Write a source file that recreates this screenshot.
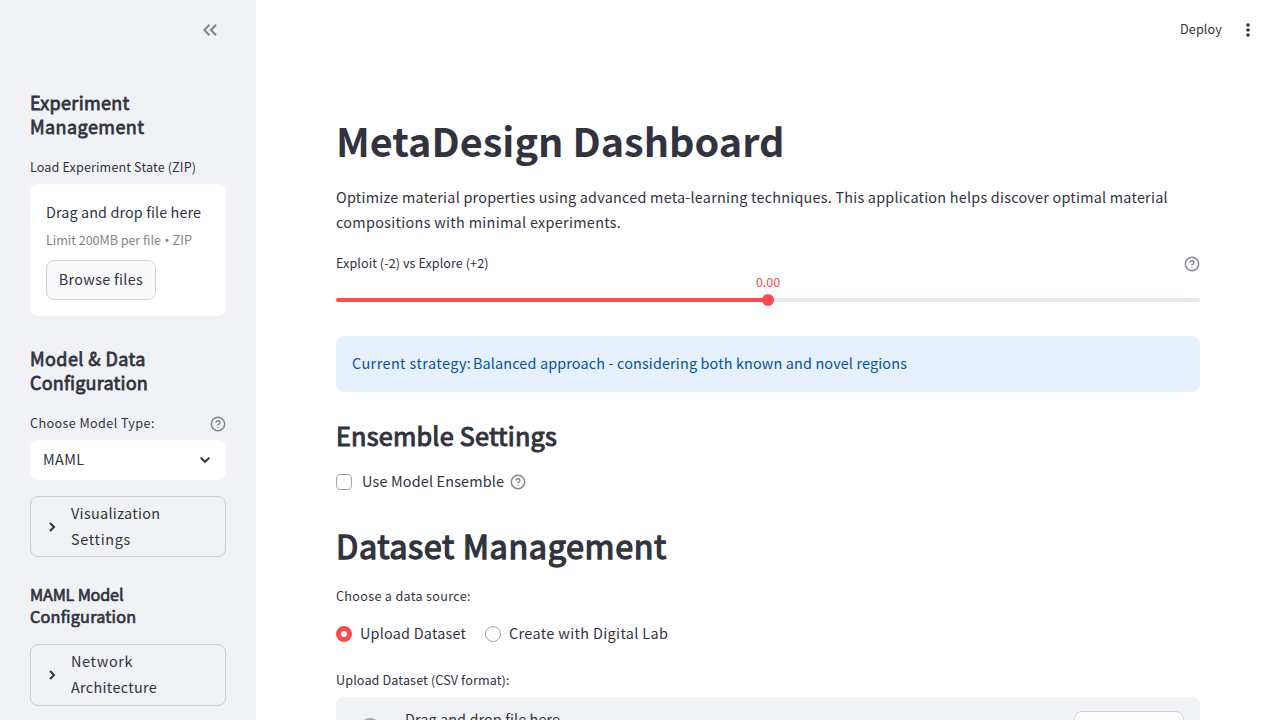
<template>
  <div class="app">
    <aside class="sidebar">
      <div class="side-head">
        <svg width="20" height="20" viewBox="0 0 20 20"><path d="M9.4 4.8 4.4 10l5 5.2M16 4.8l-5 5.2 5 5.2" /></svg>
      </div>
      <h2 class="side-title"><span class="t-exp">Experiment</span><br /><span class="t-mgmt">Management</span></h2>
      <div class="label load"><span>Load Experiment State (ZIP)</span></div>
      <div class="drop">
        <div class="drop-text">Drag and drop file here</div>
        <div class="drop-limit"><span>Limit 200MB per file</span><b>•</b><span>ZIP</span></div>
        <button class="btn">Browse files</button>
      </div>
      <h2 class="side-title second"><span class="t-model">Model &amp; Data</span><br /><span class="t-conf">Configuration</span></h2>
      <div class="label model"><span>Choose Model Type:</span>
        <svg class="help" viewBox="0 0 24 24"><circle cx="12" cy="12" r="10" /><path d="M9.09 9a3 3 0 0 1 5.83 1c0 2-3 3-3 3M12 17h.01" /></svg>
      </div>
      <div class="select"><span>MAML</span>
        <svg width="12" height="8" viewBox="0 0 12 8"><path d="m1.6 1.6 4.4 4.2 4.4-4.2" /></svg>
      </div>
      <div class="expander">
        <svg width="8" height="12" viewBox="0 0 8 12"><path d="m2 2 4 4-4 4" /></svg>
        <div><span class="t-vis">Visualization</span><br /><span class="t-wide">Settings</span></div>
      </div>
      <h3 class="side-sub"><span class="t-maml">MAML Model</span><br /><span class="t-conf">Configuration</span></h3>
      <div class="expander tall">
        <svg width="8" height="12" viewBox="0 0 8 12"><path d="m2 2 4 4-4 4" /></svg>
        <div><span class="t-wide">Network</span><br /><span class="t-vis">Architecture</span></div>
      </div>
    </aside>
    <main class="main">
      <header class="top">
        <span class="deploy">Deploy</span>
        <svg width="4" height="14" viewBox="0 0 4 14"><circle cx="2" cy="2" r="1.8" /><circle cx="2" cy="7" r="1.8" /><circle cx="2" cy="12" r="1.8" /></svg>
      </header>
      <div class="content">
        <h1>MetaDesign Dashboard</h1>
        <p><span class="t-p1">Optimize material properties using advanced meta-learning techniques. This application helps discover optimal material</span><br /><span class="t-p2">compositions with minimal experiments.</span></p>
        <div class="label explore"><span>Exploit (-2) vs Explore (+2)</span>
          <svg class="help" viewBox="0 0 24 24"><circle cx="12" cy="12" r="10" /><path d="M9.09 9a3 3 0 0 1 5.83 1c0 2-3 3-3 3M12 17h.01" /></svg>
        </div>
        <div class="slider">
          <div class="value">0.00</div>
          <div class="track"><i></i></div>
        </div>
        <div class="alert"><span class="t-cur">Current strategy:</span>&#32;<span class="t-bal">Balanced approach - considering both known and novel regions</span></div>
        <h3 class="ensemble">Ensemble Settings</h3>
        <div class="check"><i></i><span>Use Model Ensemble</span>
          <svg class="help" viewBox="0 0 24 24"><circle cx="12" cy="12" r="10" /><path d="M9.09 9a3 3 0 0 1 5.83 1c0 2-3 3-3 3M12 17h.01" /></svg>
        </div>
        <h2 class="dataset">Dataset Management</h2>
        <div class="label source"><span>Choose a data source:</span></div>
        <div class="radios">
          <i class="on"></i><span class="r1">Upload Dataset</span>
          <i></i><span class="r2">Create with Digital Lab</span>
        </div>
        <div class="label upload"><span>Upload Dataset (CSV format):</span></div>
        <div class="wide-drop">
          <svg width="36" height="36" viewBox="0 0 24 24"><path d="M19.35 10.04A7.49 7.49 0 0 0 12 4C9.11 4 6.6 5.64 5.35 8.04A5.994 5.994 0 0 0 0 14c0 3.31 2.69 6 6 6h13c2.76 0 5-2.24 5-5 0-2.64-2.05-4.78-4.65-4.96z" /></svg>
          <div class="wide-text">Drag and drop file here</div>
          <button class="btn"></button>
        </div>
      </div>
    </main>
  </div>
</template>

<style>
html, body { margin: 0; overflow: hidden; }
</style>

<style scoped>
.app { display: flex; height: 720px; overflow: hidden; background: #fff; color: #31333f; font: 14.4px/25.6px "Noto Sans CJK SC", "Noto Sans", sans-serif; white-space: nowrap; }
.app * { box-sizing: border-box; }
h1, h2, h3, p { margin: 0; }
/* semibold weight between the family's regular and bold */
h2, h3 { font-weight: 400; -webkit-text-stroke: .042em #31333f; }

.sidebar { width: 256px; flex: none; padding: 0 30px; background: #f0f2f6; overflow: hidden; height: 720px; }
.side-head { height: 60px; display: flex; justify-content: flex-end; align-items: center; padding-right: 6px; margin-bottom: 30px; }
.side-head svg { fill: none; stroke: #808389; stroke-width: 2; }
.side-title { font-size: 18px; line-height: 24px; height: 48px; }
.second { margin-top: 30px; }
.t-exp { letter-spacing: .32px; }
.t-mgmt { letter-spacing: .43px; }
.t-model { letter-spacing: .42px; }
.t-conf { letter-spacing: .21px; }
.t-maml { letter-spacing: -.18px; }
.t-vis { letter-spacing: .33px; }
.t-wide { letter-spacing: .69px; }
.label { font-size: 12.6px; line-height: 24px; height: 24px; display: flex; justify-content: space-between; align-items: center; }
.label > span { padding-bottom: 2px; }
.load { margin-top: 17px; margin-bottom: 5px; letter-spacing: .125px; }
.load > span { padding-bottom: 0; }
.help { width: 16px; height: 16px; fill: none; stroke: #83858c; stroke-width: 2.2; stroke-linecap: round; stroke-linejoin: round; overflow: visible; }
.drop { height: 132px; background: #fff; border-radius: 8px; padding: 15px 16px 16px; }
.drop-text, .wide-text { height: 25px; line-height: 25px; letter-spacing: .1px; }
.drop-limit { display: flex; height: 20px; line-height: 20px; margin: 6px 0 10px; font-size: 12.6px; letter-spacing: -.05px; color: #83858c; }
.drop-limit b { font: 13px/20px "Noto Sans"; margin: 0 3.5px; }
.btn { display: flex; align-items: center; justify-content: center; width: 110px; height: 40px; padding: 0 0 2px; border: 1px solid #d0d2d8; border-radius: 8px; background: #f9f9fb; font: inherit; color: inherit; letter-spacing: .32px; }
.model { margin: 18px 0 4px; letter-spacing: .4px; }
.select { height: 40px; border-radius: 8px; background: #fff; display: flex; align-items: center; justify-content: space-between; padding: 0 15px 0 13px; letter-spacing: .35px; }
.select > span { padding-bottom: 2px; }
.select svg, .expander svg { fill: none; stroke: #31333f; stroke-width: 2; }
.expander { height: 61px; margin-top: 16px; border: 1px solid #caccd2; border-radius: 8px; display: flex; align-items: center; padding-left: 17px; gap: 15px; }
.expander div { padding-bottom: 2px; }
.expander.tall { height: 62px; }
.side-sub { margin-top: 26px; font-size: 16.2px; line-height: 22px; padding-bottom: 1px; }

.main { flex: 1; min-width: 0; }
.top { height: 60px; display: flex; align-items: center; justify-content: flex-end; padding-right: 30px; gap: 24px; font-size: 12.6px; }
.deploy { padding-bottom: 2px; letter-spacing: .14px; }
.top svg { fill: #31333f; }
.content { padding: 36px 80px 0; }
h1 { height: 88px; padding-top: 17px; font-size: 39.6px; line-height: 53px; font-weight: 700; letter-spacing: .01px; }
p { height: 52px; line-height: 25px; }
.t-p1 { letter-spacing: .233px; }
.t-p2 { letter-spacing: .31px; }
.explore { margin-top: 16px; letter-spacing: .07px; }
.slider { height: 60px; }
.value { height: 20px; line-height: 12px; text-align: center; font-size: 12.6px; color: #ff4b4b; letter-spacing: -.1px; }
.track { height: 4px; margin-top: 2px; border-radius: 2px; background: linear-gradient(to right, #ff4b4b 50%, #e4e9ef 50%); display: flex; align-items: center; justify-content: center; }
.track i { width: 12px; height: 12px; border-radius: 50%; background: #ff4b4b; flex: none; }
.alert { height: 56px; line-height: 54px; padding-left: 16px; border-radius: 8px; background: #e7f1fe; color: #0054a3; word-spacing: -1.6px; }
.alert span { word-spacing: 0; }
.t-cur { letter-spacing: .43px; }
.t-bal { letter-spacing: .148px; }
.ensemble { margin-top: 26px; font-size: 25.2px; line-height: 34px; letter-spacing: .24px; }
.check { margin-top: 18px; height: 24px; display: flex; align-items: center; letter-spacing: .17px; }
.check span { padding-bottom: 2px; }
.check i { width: 16px; height: 16px; border: 1px solid #a5a7ad; border-radius: 4px; margin-right: 10px; }
.check .help { margin-left: 6px; }
.dataset { margin-top: 29px; font-size: 32.4px; line-height: 43px; letter-spacing: .6px; }
.source { margin-top: 19px; letter-spacing: .318px; }
.radios { margin-top: 13px; height: 24px; display: flex; align-items: center; }
.radios i { width: 16px; height: 16px; border-radius: 50%; border: 1px solid #a5a7ad; margin-right: 8px; }
.radios i.on { border: 5px solid #ff4b4b; }
.r1, .r2 { padding-bottom: 2px; }
.r1 { margin-right: 18.8px; letter-spacing: .225px; }
.r2 { letter-spacing: .37px; }
.upload { margin-top: 23px; letter-spacing: .127px; }
.wide-drop { margin-top: 4px; height: 72px; background: #f0f2f6; border-radius: 8px; padding: 14px 16px 0; display: flex; align-items: flex-start; }
.wide-drop svg { margin-top: 1px; margin-right: 17px; fill: #a3a8b8; }
.wide-drop .btn { margin-left: auto; background: #fff; }
.wide-text { margin-top: -5px; }
</style>
